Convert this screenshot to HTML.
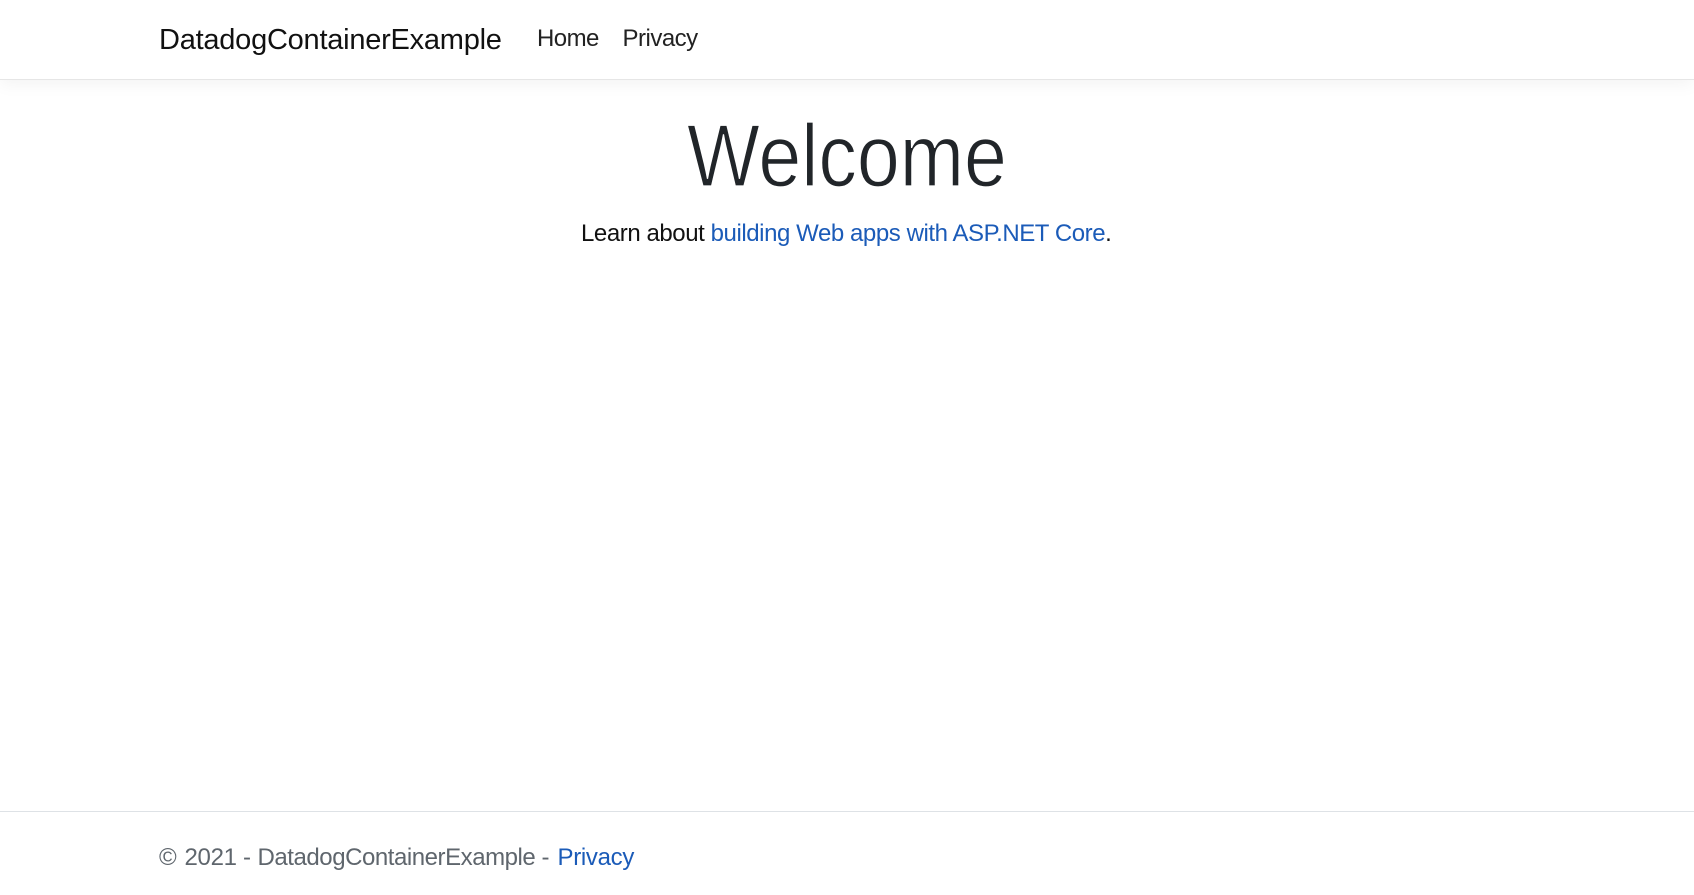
<!DOCTYPE html>
<html lang="en"><head><meta charset="utf-8"><title>Home page - DatadogContainerExample</title>
<style>
html,body{margin:0;padding:0;background:#fff;width:1694px;height:895px;overflow:hidden;font-family:"Liberation Sans",sans-serif}
a{text-decoration:none;color:#1b5bb8}
.t{position:absolute;white-space:nowrap;line-height:1}
.f{top:846px;font-size:24px;letter-spacing:-.31px;color:#5f666d}
#nav{position:absolute;left:0;top:0;width:1694px;height:79px;background:#fff;border-bottom:1px solid #e6e6e6;box-shadow:0 4px 16px rgba(0,0,0,.05)}
#foot{position:absolute;left:0;top:811px;width:1694px;height:1px;background:#dee2e6}
</style></head><body>
<div id="nav"></div>
<a class="t" style="left:159px;top:26px;font-size:29px;letter-spacing:-.24px;color:#111">DatadogContainerExample</a>
<a class="t" style="left:537px;top:27px;font-size:24px;letter-spacing:-.55px;color:#222">Home</a>
<a class="t" style="left:622.5px;top:27px;font-size:24px;letter-spacing:-.5px;color:#222">Privacy</a>
<h1 class="t" style="margin:0;left:687px;top:112px;font-size:88px;font-weight:400;color:#212529;-webkit-text-stroke:1.3px #fff;transform-origin:0 0;transform:scaleX(.876)">Welcome</h1>
<p class="t" style="margin:0;left:581px;top:222px;font-size:24px;letter-spacing:-.43px;color:#111">Learn about <a href="#">building Web apps with ASP.NET Core</a>.</p>
<div id="foot"></div>
<span class="t f" style="left:159px">©</span>
<span class="t f" style="left:184.5px">2021 -</span>
<span class="t f" style="left:257.5px;letter-spacing:-.45px">DatadogContainerExample -</span>
<a class="t f" href="#" style="left:557.5px;color:#1b5bb8">Privacy</a>
</body></html>
